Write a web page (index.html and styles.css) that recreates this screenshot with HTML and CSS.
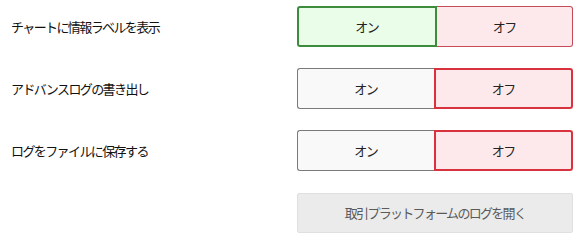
FILE: index.html
```html
<!DOCTYPE html>
<html lang="ja">
<head>
    <meta charset="UTF-8">
    <title>ログ設定</title>
    <link rel="stylesheet" href="styles.css">
</head>
<body>
    <div class="settings">
        <div class="row">
            <div class="label">チャートに情報ラベルを表示</div>
            <div class="toggle">
                <button class="opt on active">オン</button>
                <button class="opt off">オフ</button>
            </div>
        </div>
        <div class="row">
            <div class="label">アドバンスログの書き出し</div>
            <div class="toggle">
                <button class="opt">オン</button>
                <button class="opt off active">オフ</button>
            </div>
        </div>
        <div class="row">
            <div class="label">ログをファイルに保存する</div>
            <div class="toggle">
                <button class="opt">オン</button>
                <button class="opt off active">オフ</button>
            </div>
        </div>
        <div class="row">
            <div class="label"></div>
            <button class="open-log">取引プラットフォームのログを開く</button>
        </div>
    </div>
</body>
</html>
```

FILE: styles.css
```css
body { margin: 0; background: #fff; font-family: "Noto Sans CJK JP", "Noto Sans", sans-serif; color: #111; }
.settings { display: flex; flex-direction: column; gap: 21px; padding: 6px 12px 0 11px; }
.row { display: flex; align-items: center; height: 41px; }
.label { flex: 1; font-size: 13px; letter-spacing: -1.6px; }
.toggle { display: flex; width: 276px; height: 41px; }
.opt { flex: 1; font-family: inherit; font-size: 13px; letter-spacing: -1.6px; color: #222; background: #f9f9f9; border: 1px solid #7a7a7a; padding: 0; margin: 0; }
.opt:first-child { border-radius: 3px 0 0 3px; border-right: none; }
.opt:last-child { border-radius: 0 3px 3px 0; border-left: none; }
.opt.off { background: #fde9eb; border-color: #c64a5a; }
.opt.on.active { background: #e9fde9; border: 2px solid #3d8b3d; }
.opt.off.active { border: 2px solid #d8323e; }
.open-log { width: 276px; height: 40px; font-family: inherit; font-size: 13px; letter-spacing: -1.7px; color: #5a5a5a; background: #ebebeb; border: 1px solid #e0e0e0; border-radius: 2px; padding: 0; }
```
